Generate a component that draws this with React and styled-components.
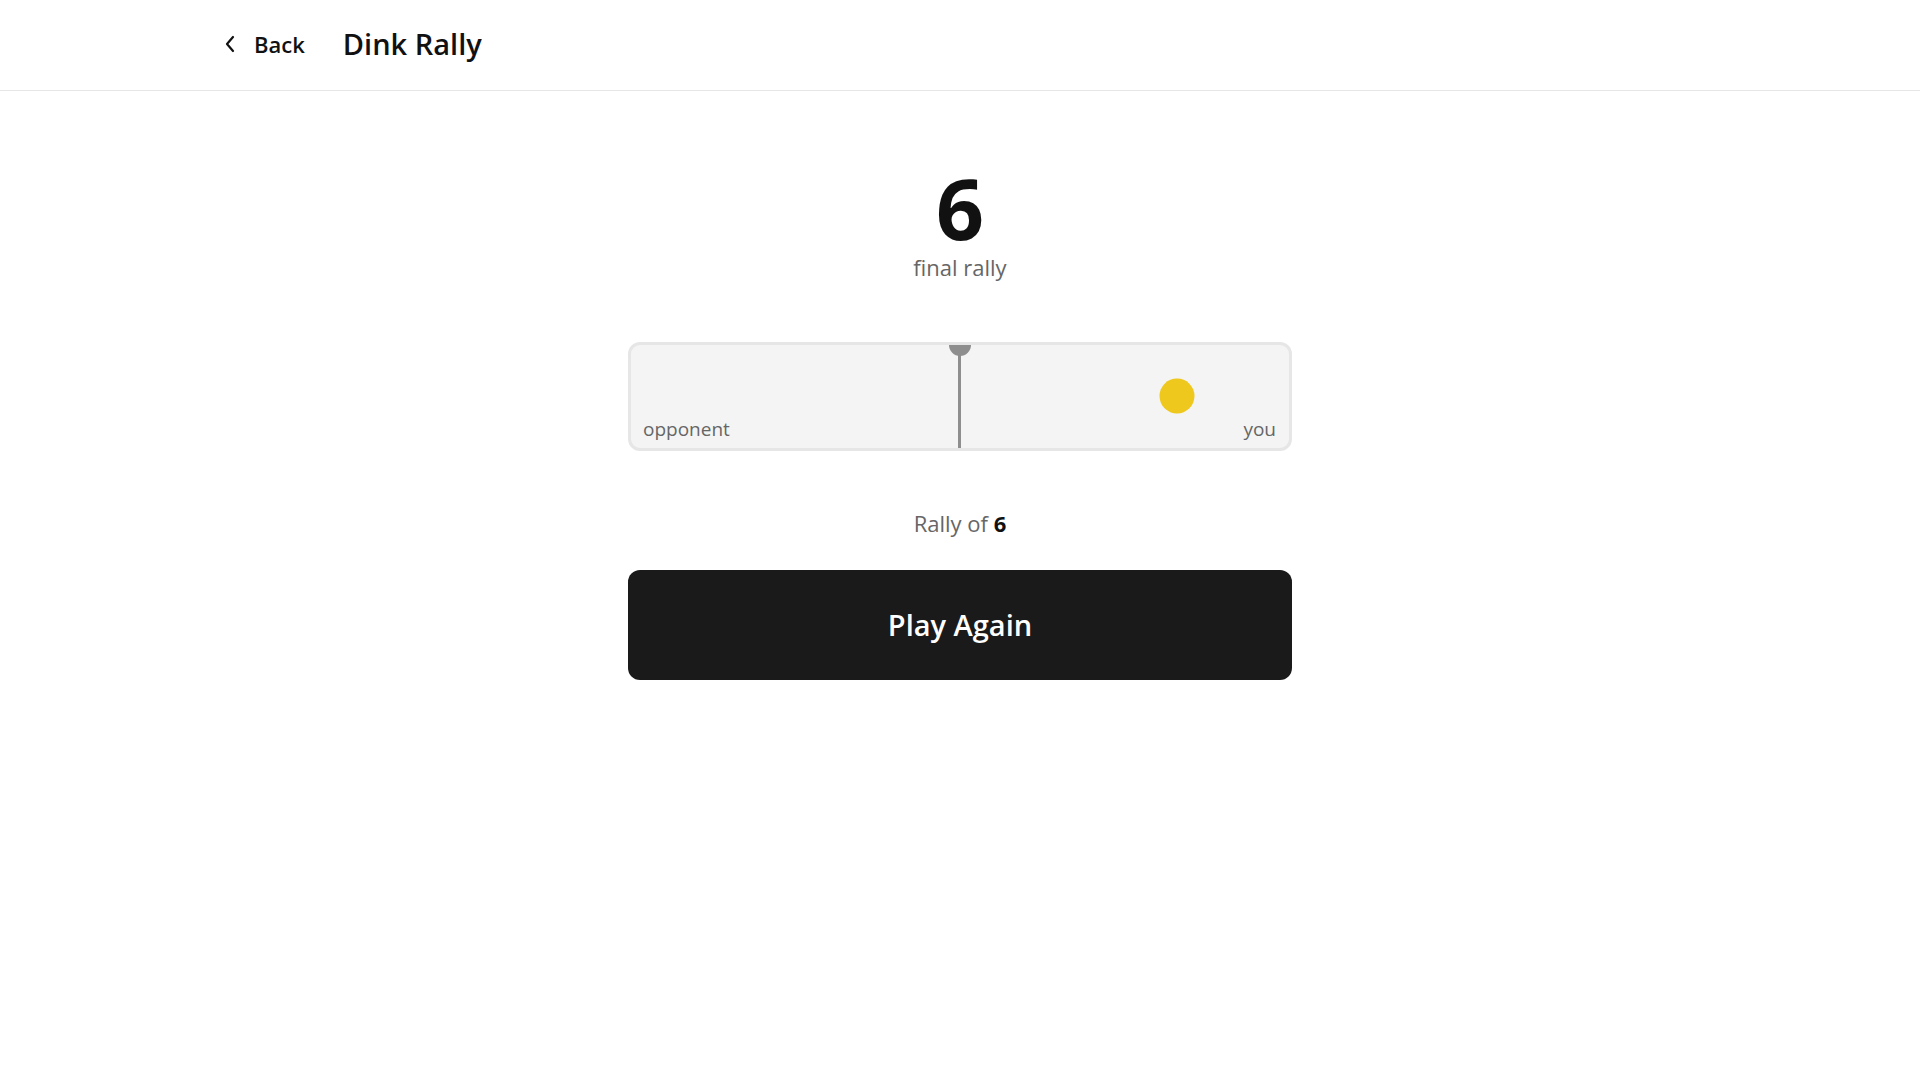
import React from "react";
import styled, { createGlobalStyle } from "styled-components";

const GlobalStyle = createGlobalStyle`
  body {
    margin: 0;
    background-color: #ffffff;
    font-family: "Open Sans", "Noto Sans", sans-serif;
    color: #111111;
  }
`;

const Page = styled.div`
  min-height: 100vh;
  background-color: #ffffff;
`;

const Header = styled.header`
  box-sizing: border-box;
  height: 91px;
  border-bottom: 1px solid #e6e6e6;
  display: flex;
  align-items: center;
  padding: 0 0 3px 224px;
`;

const BackLink = styled.a`
  display: flex;
  align-items: center;
  gap: 18px;
  color: #111111;
  text-decoration: none;
  font-size: 22px;
  font-weight: 600;
  margin-right: 38px;
`;

const Title = styled.h1`
  margin: 0;
  font-size: 29px;
  font-weight: 600;
  color: #111111;
`;

const Main = styled.main`
  width: 664px;
  margin: 0 auto;
  display: flex;
  flex-direction: column;
  align-items: center;
  padding-top: 71px;
`;

const Score = styled.div`
  font-size: 84px;
  font-weight: 700;
  line-height: 1.1;
  color: #111111;
`;

const ScoreLabel = styled.div`
  font-size: 22px;
  line-height: 1.2;
  color: #666666;
`;

const Court = styled.div`
  position: relative;
  box-sizing: border-box;
  width: 100%;
  height: 109px;
  margin-top: 61px;
  background-color: #f4f4f4;
  border: 3px solid #e6e6e6;
  border-radius: 12px;
  display: flex;
  justify-content: space-between;
  align-items: flex-end;
  padding: 0 13px 6px 12px;
`;

const Net = styled.div`
  position: absolute;
  top: 0;
  bottom: 0;
  left: 50%;
  width: 3px;
  margin-left: -2px;
  background-color: #8e8e8e;

  &::before {
    content: "";
    position: absolute;
    top: 0;
    left: 50%;
    width: 22px;
    height: 11px;
    margin-left: -11px;
    background-color: #8e8e8e;
    border-radius: 0 0 11px 11px;
  }
`;

const Ball = styled.div`
  position: absolute;
  width: 35px;
  height: 35px;
  border-radius: 50%;
  background-color: #eec81c;
  top: 50%;
  transform: translate(-50%, -50%);
`;

const Side = styled.span`
  font-size: 19px;
  color: #666666;
`;

const RallyText = styled.div`
  margin-top: 57px;
  font-size: 22px;
  color: #666666;

  b {
    color: #111111;
    font-weight: 700;
  }
`;

const PlayButton = styled.button`
  width: 100%;
  height: 110px;
  margin-top: 32px;
  border: none;
  border-radius: 12px;
  background-color: #1a1a1a;
  color: #ffffff;
  font-family: "Open Sans", "Noto Sans", sans-serif;
  font-size: 29px;
  font-weight: 600;
  cursor: pointer;
`;

const ChevronLeft = () => (
  <svg width="12" height="18" viewBox="0 0 12 18" fill="none">
    <path d="M9 2 L3 9 L9 16" stroke="#111" strokeWidth="2.2" strokeLinecap="round" strokeLinejoin="round" />
  </svg>
);

const App = () => {
  const rally = 6;
  const ballX = 83;
  return (
    <Page>
      <GlobalStyle />
      <Header>
        <BackLink href="#">
          <ChevronLeft />
          Back
        </BackLink>
        <Title>Dink Rally</Title>
      </Header>
      <Main>
        <Score>{rally}</Score>
        <ScoreLabel>final rally</ScoreLabel>
        <Court>
          <Net />
          <Ball style={{ left: `${ballX}%` }} />
          <Side>opponent</Side>
          <Side>you</Side>
        </Court>
        <RallyText>
          Rally of <b>{rally}</b>
        </RallyText>
        <PlayButton type="button">Play Again</PlayButton>
      </Main>
    </Page>
  );
};

export default App;
